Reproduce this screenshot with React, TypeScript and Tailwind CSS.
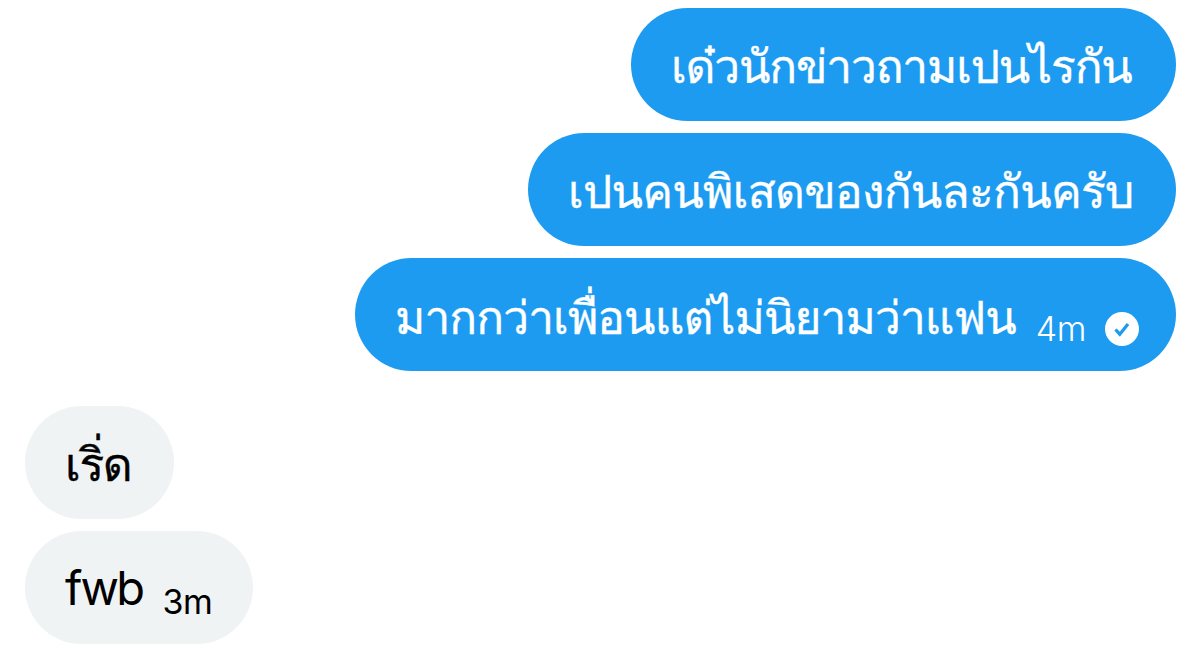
type Message = {
    id: number;
    text: string;
    mine: boolean;
    size: string;
    textSize: string;
    time?: string;
};

const messages: Message[] = [
    { id: 1, text: 'เด๋วนักข่าวถามเปนไรกัน', mine: true, size: 'w-[545px]', textSize: 'text-[46px] tracking-[-1.15px] pt-[4px]' },
    { id: 2, text: 'เปนคนพิเสดของกันละกันครับ', mine: true, size: 'w-[648px]', textSize: 'text-[46px] tracking-[-0.7px] pt-[4px]' },
    { id: 3, text: 'มากกว่าเพื่อนแต่ไม่นิยามว่าแฟน', mine: true, size: 'w-[821px]', textSize: 'text-[46px] tracking-[-0.9px] pt-[4px]', time: '4m' },
    { id: 4, text: 'เริ่ด', mine: false, size: 'w-[149px] mt-[22px]', textSize: 'text-[46px] tracking-[-1.3px] pt-[4px]' },
    { id: 5, text: 'fwb', mine: false, size: 'w-[228px]', textSize: 'text-[47px] tracking-[-2.6px]', time: '3m' },
];

function SentIcon() {
    return (
        <svg className="w-[34px] h-[34px] ml-auto mr-[-3px] mt-[28px]" viewBox="0 0 34 34" fill="none">
            <circle cx="17" cy="17" r="17" fill="white" />
            <path d="M10.5 17.5l4.3 4.7 8.2-10.2" stroke="#1d9bf0" strokeWidth="3.2" />
        </svg>
    );
}

function Bubble({ message }: { message: Message }) {
    const { text, mine, size, textSize, time } = message;

    return (
        <div
            className={`flex items-center h-[113px] rounded-full px-10 whitespace-nowrap ${size} ${
                mine ? 'self-end bg-[#1d9bf0] text-white' : 'self-start bg-[#eff3f4] text-black'
            }`}
        >
            <span className={`leading-[1] ${mine || !time ? '[-webkit-text-stroke:0.4px_currentColor]' : ''} ${textSize}`}>
                {text}
            </span>
            {time && (
                <span className={`ml-5 mt-[29px] text-[34px] leading-none tracking-[-0.5px] ${mine ? 'font-light' : ''}`}>
                    {time}
                </span>
            )}
            {mine && time && <SentIcon />}
        </div>
    );
}

function App() {
    return (
        <main className="flex flex-col gap-[12.4px] w-[1200px] h-[669px] overflow-hidden bg-white pt-[7.6px] pl-[25px] pr-6 font-['Inter','Loma',sans-serif]">
            {messages.map((message) => (
                <Bubble key={message.id} message={message} />
            ))}
        </main>
    );
}

export default App;
